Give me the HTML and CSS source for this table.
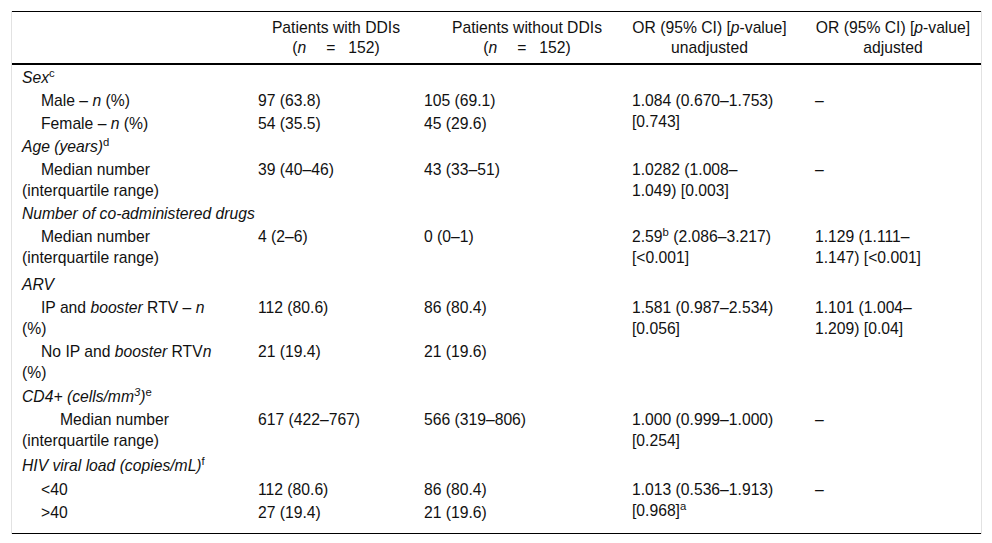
FILE: index.html
```html
<!DOCTYPE html>
<html lang="en">
<head>
<meta charset="utf-8">
<title>Table</title>
<link rel="stylesheet" href="styles.css">
</head>
<body>
<div class="wrap">
<table class="tbl">
<thead>
<tr>
<th class="h1"></th>
<th class="h2">Patients with DDIs<br>(<i>n</i><span class="eq">=</span>152)</th>
<th class="h3">Patients without DDIs<br>(<i>n</i><span class="eq">=</span>152)</th>
<th class="h4">OR (95% CI) [<i>p</i>-value]<br>unadjusted</th>
<th class="h5">OR (95% CI) [<i>p</i>-value]<br>adjusted</th>
</tr>
</thead>
<tbody>
<tr class="first"><td class="cat" colspan="5"><i>Sex</i><sup>c</sup></td></tr>
<tr>
<td class="ind">Male – <i>n</i> (%)</td>
<td>97 (63.8)</td>
<td>105 (69.1)</td>
<td rowspan="2">1.084 (0.670–1.753) [0.743]</td>
<td class="c5" rowspan="2">–</td>
</tr>
<tr>
<td class="ind">Female – <i>n</i> (%)</td>
<td>54 (35.5)</td>
<td>45 (29.6)</td>
</tr>
<tr><td class="cat" colspan="5"><i>Age (years)</i><sup>d</sup></td></tr>
<tr>
<td class="ind">Median number (interquartile range)</td>
<td>39 (40–46)</td>
<td>43 (33–51)</td>
<td>1.0282 (1.008–1.049) [0.003]</td>
<td class="c5">–</td>
</tr>
<tr><td class="cat" colspan="5"><i>Number of co-administered drugs</i></td></tr>
<tr class="loose">
<td class="ind">Median number (interquartile range)</td>
<td>4 (2–6)</td>
<td>0 (0–1)</td>
<td>2.59<sup>b</sup> (2.086–3.217) [&lt;0.001]</td>
<td class="c5">1.129 (1.111–1.147) [&lt;0.001]</td>
</tr>
<tr><td class="cat" colspan="5"><i>ARV</i></td></tr>
<tr>
<td class="ind">IP and <i>booster</i> RTV – <i>n</i> (%)</td>
<td>112 (80.6)</td>
<td>86 (80.4)</td>
<td>1.581 (0.987–2.534) [0.056]</td>
<td class="c5">1.101 (1.004–1.209) [0.04]</td>
</tr>
<tr class="soft">
<td class="ind">No IP and <i>booster</i> RTV<i>n</i> (%)</td>
<td>21 (19.4)</td>
<td>21 (19.6)</td>
<td></td>
<td class="c5"></td>
</tr>
<tr><td class="cat" colspan="5"><i>CD4+ (cells/mm<sup>3</sup>)</i><sup>e</sup></td></tr>
<tr class="mid">
<td class="ind2">Median number (interquartile range)</td>
<td>617 (422–767)</td>
<td>566 (319–806)</td>
<td>1.000 (0.999–1.000) [0.254]</td>
<td class="c5">–</td>
</tr>
<tr class="soft"><td class="cat" colspan="5"><i>HIV viral load (copies/mL)</i><sup>f</sup></td></tr>
<tr>
<td class="ind">&lt;40</td>
<td>112 (80.6)</td>
<td>86 (80.4)</td>
<td rowspan="2">1.013 (0.536–1.913) [0.968]<sup>a</sup></td>
<td class="c5" rowspan="2">–</td>
</tr>
<tr class="last">
<td class="ind">&gt;40</td>
<td>27 (19.4)</td>
<td>21 (19.6)</td>
</tr>
</tbody>
</table>
</div>
</body>
</html>
```

FILE: styles.css
```css
html, body {
  margin: 0;
  padding: 0;
  background: #ffffff;
}

body {
  font-family: "Liberation Sans", Arial, sans-serif;
  font-size: 15.7px;
  color: #111111;
}

.wrap {
  margin: 11px 0 0 11px;
  width: 971px;
  box-sizing: border-box;
  border-left: 1px solid #e2e2e2;
  border-right: 1px solid #e2e2e2;
}

.tbl {
  width: 969px;
  table-layout: fixed;
  border-collapse: separate;
  border-spacing: 0;
  border-top: 1px solid #000000;
  border-bottom: 1px solid #000000;
}

.tbl th {
  font-weight: normal;
  text-align: center;
  vertical-align: top;
  line-height: 20px;
  border-bottom: 2px solid #000000;
}

.tbl .h1 { width: 216px; padding: 6px 10px 5px; }
.tbl .h2 { width: 156px; padding: 6px 0 5px 10px; }
.tbl .h3 { width: 190px; padding: 6px 0 5px 18px; }
.tbl .h4 { width: 165px; padding: 6px 13px 5px 5px; }
.tbl .h5 { width: 166px; padding: 6px 5px 5px; }

.eq {
  margin: 0 13px 0 20px;
}

.tbl td {
  vertical-align: top;
  text-align: left;
  line-height: 21px;
  padding: 1px 27px 1px 10px;
}

.tbl td.c5 {
  padding-right: 32px;
}

.tbl td.cat {
  padding-right: 10px;
}

.tbl tr.first td {
  padding-top: 2px;
}

.tbl tr.loose td {
  padding-bottom: 5px;
}

.tbl tr.soft td {
  padding-bottom: 2px;
}

.tbl tr.mid td {
  padding-bottom: 3px;
}

.tbl tr.last td {
  padding-bottom: 10px;
}

.ind {
  text-indent: 19px;
}

.ind2 {
  text-indent: 38px;
}

sup {
  font-size: 0.72em;
  vertical-align: super;
  line-height: 0;
}
```
